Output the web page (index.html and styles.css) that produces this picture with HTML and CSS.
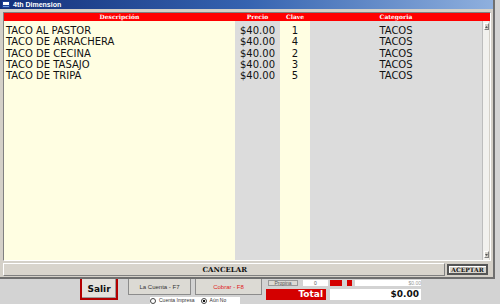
FILE: index.html
```html
<!DOCTYPE html>
<html lang="es">
<head>
    <meta charset="UTF-8">
    <title>4th Dimension</title>
    <link rel="stylesheet" href="styles.css">
</head>
<body>

    <div class="window">
        <div class="titlebar">
            <svg class="app-icon" width="8" height="7" viewBox="0 0 8 7">
                <rect x="0" y="0" width="8" height="7" fill="#1c3f94"/>
                <rect x="1" y="1" width="6" height="3" fill="#ffffff"/>
                <rect x="1" y="5" width="6" height="1" fill="#6e9be0"/>
            </svg>
            <span>4th Dimension</span>
        </div>

        <div class="dialog">
            <div class="listbox">
                <div class="list-head">
                    <div class="c-desc">Descripción</div>
                    <div class="c-precio">Precio</div>
                    <div class="c-clave">Clave</div>
                    <div class="c-cat">Categoria</div>
                    <div class="c-scroll"></div>
                </div>
                <div class="list-body">
                    <div class="col c-desc left">
                        <div class="cell">TACO AL PASTOR</div>
                        <div class="cell">TACO DE ARRACHERA</div>
                        <div class="cell">TACO DE CECINA</div>
                        <div class="cell">TACO DE TASAJO</div>
                        <div class="cell">TACO DE TRIPA</div>
                    </div>
                    <div class="col c-precio">
                        <div class="cell">$40.00</div>
                        <div class="cell">$40.00</div>
                        <div class="cell">$40.00</div>
                        <div class="cell">$40.00</div>
                        <div class="cell">$40.00</div>
                    </div>
                    <div class="col c-clave">
                        <div class="cell">1</div>
                        <div class="cell">4</div>
                        <div class="cell">2</div>
                        <div class="cell">3</div>
                        <div class="cell">5</div>
                    </div>
                    <div class="col c-cat">
                        <div class="cell">TACOS</div>
                        <div class="cell">TACOS</div>
                        <div class="cell">TACOS</div>
                        <div class="cell">TACOS</div>
                        <div class="cell">TACOS</div>
                    </div>
                    <div class="c-scroll scrollbar">
                        <div class="sb-btn">
                            <svg width="3" height="2" viewBox="0 0 3 2"><path d="M0 2 L1.5 0 L3 2Z" fill="#555"/></svg>
                        </div>
                        <div class="sb-track"></div>
                        <div class="sb-btn">
                            <svg width="3" height="2" viewBox="0 0 3 2"><path d="M0 0 L1.5 2 L3 0Z" fill="#555"/></svg>
                        </div>
                    </div>
                </div>
            </div>

            <div class="actions">
                <button class="btn-cancel">CANCELAR</button>
                <button class="btn-ok">ACEPTAR</button>
            </div>
        </div>
    </div>

    <div class="app-strip">
        <button class="btn-salir">Salir</button>

        <div class="mid-group">
            <div class="mid-buttons">
                <button class="btn-flat">La Cuenta - F7</button>
                <button class="btn-flat red-text">Cobrar - F8</button>
            </div>
            <div class="radios">
                <label><span class="radio"></span>Cuenta Impresa</label>
                <label><span class="radio on"></span>Aún No</label>
            </div>
        </div>

        <div class="totals">
            <div class="tip-row">
                <span class="tip-btn">Propina</span>
                <span class="tip-box">0</span>
                <span class="mini-red wide"></span>
                <span class="mini-red"></span>
                <span class="tip-amount">$0.00</span>
            </div>
            <div class="total-row">
                <span class="total-label">Total</span>
                <span class="total-value">$0.00</span>
            </div>
        </div>
    </div>

</body>
</html>
```

FILE: styles.css
```css
body {
    margin: 0;
    width: 500px;
    height: 304px;
    overflow: hidden;
    background-color: #d3d3d3;
    font-family: "DejaVu Sans", Verdana, sans-serif;
}

.window {
    width: 493px;
    background-color: #d4d0c8;
    border-right: 2px solid #6f6f6f;
    border-bottom: 2px solid #6f6f6f;
}

.titlebar {
    height: 9px;
    display: flex;
    align-items: center;
    gap: 3px;
    padding-left: 2px;
    background: linear-gradient(to right, #14307a 0%, #3563b0 50%, #8fb0de 100%);
    color: white;
    font-family: "Liberation Sans", Arial, sans-serif;
    font-size: 7px;
    font-weight: bold;
}

.dialog {
    padding: 3px 2px 1px 3px;
}

.listbox {
    border: 1px solid #808080;
    border-right-color: #ffffff;
    border-bottom-color: #ffffff;
}

.list-head {
    display: flex;
    height: 8px;
    background-color: #ff0000;
    color: white;
    font-family: "DejaVu Serif", serif;
    font-size: 6px;
    font-weight: bold;
    line-height: 8px;
    text-align: center;
}

.c-desc { width: 231px; }
.c-precio { width: 45px; }
.c-clave { width: 30px; }
.c-cat { width: 172px; }
.c-scroll { width: 7px; }

.list-body {
    display: flex;
    height: 239px;
}

.col {
    padding-top: 4px;
    font-size: 10px;
    line-height: 11.3px;
    color: #111;
    text-align: center;
}

.col.left {
    text-align: left;
    padding-left: 2px;
    box-sizing: border-box;
}

.c-desc.col, .c-clave.col {
    background-color: #fffee2;
}

.c-precio.col, .c-cat.col {
    background-color: #dcdcdc;
}

.scrollbar {
    display: flex;
    flex-direction: column;
    background-color: #f2f1ee;
    border-left: 1px solid #bdbdbd;
    box-sizing: border-box;
}

.sb-btn {
    height: 5px;
    margin: 2px 0 2px 1px;
    background-color: #d4d0c8;
    border: 1px solid #808080;
    border-top-color: #fff;
    border-left-color: #fff;
    display: flex;
    align-items: center;
    justify-content: center;
}

.sb-track {
    flex: 1;
}

.actions {
    display: flex;
    gap: 2px;
    margin-top: 2px;
    height: 13px;
}

.actions button {
    font-family: "DejaVu Serif", serif;
    font-size: 7px;
    font-weight: bold;
    color: #111;
    padding: 0;
    cursor: pointer;
}

.btn-cancel {
    width: 442px;
    background-color: #d8d4cc;
    border: 1px solid #fff;
    border-right-color: #808080;
    border-bottom-color: #808080;
    text-align: right;
    padding-right: 197px !important;
}

.actions .btn-ok {
    width: 41px;
    height: 11px;
    margin-top: 1px;
    background-color: #d8d4cc;
    border: 2px solid #555;
    box-shadow: inset 1px 1px #fff;
    font-size: 6px;
    line-height: 7px;
}

.app-strip {
    display: flex;
    align-items: flex-start;
    padding-left: 80px;
}

.btn-salir {
    width: 38px;
    height: 21px;
    background-color: #e4e1dc;
    border: 2px solid #b40000;
    border-top: none;
    box-shadow: inset -1px -1px #9a9a9a;
    font-family: "DejaVu Sans", sans-serif;
    font-size: 9px;
    font-weight: bold;
    color: #111;
    padding: 0;
}

.mid-group {
    margin-left: 10px;
    display: flex;
    flex-direction: column;
}

.mid-buttons {
    display: flex;
    gap: 4px;
}

.btn-flat {
    width: 63px;
    height: 16px;
    background-color: #dcdad4;
    border: 1px solid #8c8c8c;
    border-top: none;
    font-family: "Liberation Sans", Arial, sans-serif;
    font-size: 6px;
    color: #333;
    padding: 0;
}

.btn-flat.red-text {
    width: 67px;
    color: #e02020;
}

.radios {
    display: flex;
    gap: 6px;
    margin: 2px 0 0 22px;
    background-color: #ffffff;
    width: 90px;
    height: 7px;
    font-family: "Liberation Sans", Arial, sans-serif;
    font-size: 5px;
    line-height: 7px;
    color: #333;
}

.radios label {
    display: flex;
    align-items: center;
    gap: 3px;
}

.radio {
    width: 4px;
    height: 4px;
    border: 1px solid #444;
    border-radius: 50%;
    box-sizing: content-box;
}

.radio.on {
    background: radial-gradient(circle, #111 40%, #fff 45%);
}

.totals {
    margin-left: 4px;
    display: flex;
    flex-direction: column;
    gap: 3px;
    padding-top: 1px;
}

.tip-row {
    display: flex;
    align-items: center;
    height: 6px;
    font-family: "Liberation Sans", Arial, sans-serif;
    font-size: 5px;
    color: #555;
}

.tip-btn {
    width: 30px;
    height: 6px;
    margin-left: 2px;
    background-color: #dcdad4;
    border: 1px solid #999;
    box-sizing: border-box;
    text-align: center;
    line-height: 5px;
}

.tip-box {
    width: 25px;
    height: 6px;
    margin-left: 5px;
    background-color: #fff;
    text-align: center;
    line-height: 6px;
}

.mini-red {
    width: 5px;
    height: 6px;
    margin-left: 5px;
    background-color: #d40000;
}

.mini-red.wide {
    width: 12px;
    margin-left: 2px;
}

.tip-amount {
    width: 66px;
    height: 6px;
    margin-left: 3px;
    background-color: #fff;
    text-align: right;
    line-height: 6px;
    color: #999;
}

.total-row {
    display: flex;
    gap: 4px;
    height: 11px;
    font-family: "DejaVu Sans", sans-serif;
    font-size: 9px;
    font-weight: bold;
    line-height: 11px;
}

.total-label {
    width: 60px;
    background-color: #d40000;
    color: white;
    text-align: right;
    padding-right: 3px;
    box-sizing: border-box;
}

.total-value {
    width: 91px;
    background-color: #fff;
    color: #111;
    text-align: right;
    padding-right: 2px;
    box-sizing: border-box;
}
```
